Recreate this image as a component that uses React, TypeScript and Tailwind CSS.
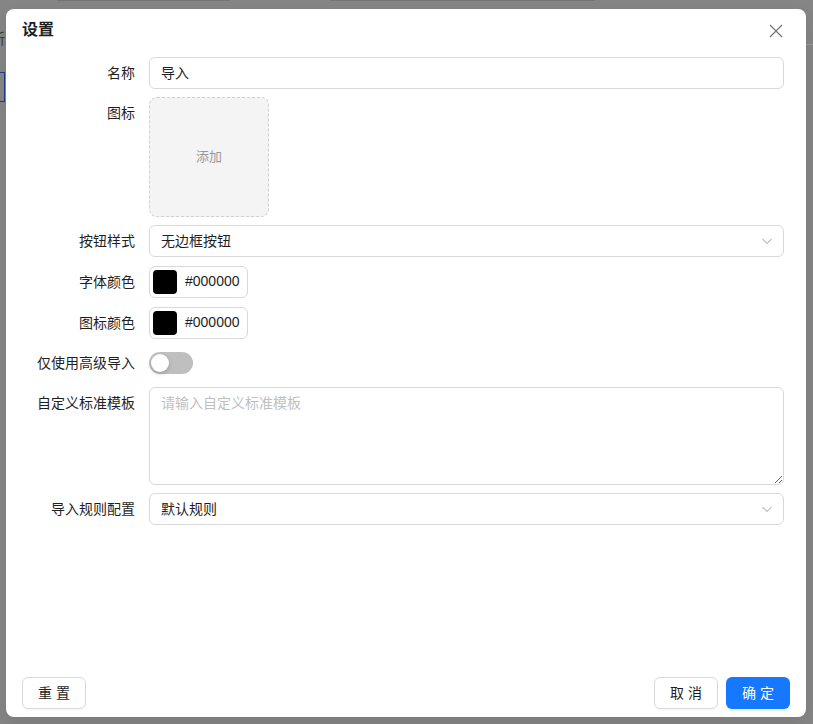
import React from "react";

const font = { fontFamily: '"Liberation Sans", "Noto Sans CJK SC", sans-serif' };

function Chevron() {
  return (
    <svg width="12" height="12" viewBox="0 0 12 12" className="shrink-0">
      <path d="M1.5 4 L6 8.5 L10.5 4" fill="none" stroke="#bfbfbf" strokeWidth="1.1" />
    </svg>
  );
}

function Label({ children }: { children: React.ReactNode }) {
  return (
    <div className="w-[127px] shrink-0 pr-[14px] text-right h-8 leading-8 text-[14px] text-[#1f1f1f] whitespace-nowrap">
      {children}
    </div>
  );
}

function Select({ value }: { value: string }) {
  return (
    <div className="flex-1 h-8 border border-[#d9d9d9] rounded-[6px] bg-white flex items-center justify-between pl-[11px] pr-[10px]">
      <span className="text-[14px] text-[#1f1f1f]">{value}</span>
      <Chevron />
    </div>
  );
}

function ColorPicker() {
  return (
    <div className="h-[32px] border border-[#d9d9d9] rounded-[6px] bg-white flex items-center pl-[3px] pr-[7px] gap-[8px]">
      <div className="w-6 h-6 rounded-[4px] bg-black" />
      <span className="text-[14px] text-[#1f1f1f]">#000000</span>
    </div>
  );
}

export default function App() {
  return (
    <div style={font} className="relative w-[813px] h-[724px] overflow-hidden bg-[#858585]">
      {/* faint page content under the mask */}
      <div className="absolute left-[57px] top-0 w-[173px] h-px bg-[#747474]" />
      <div className="absolute left-[330px] top-0 w-[265px] h-px bg-[#747474]" />
      <div className="absolute left-[-10px] top-[28px] text-[15px] text-[#3c3c3c]">新</div>
      <div className="absolute left-[-20px] top-[72px] w-[25px] h-[30px] border border-[#1c3d8a]" />
      <div className="absolute left-[806px] top-[44px] w-[7px] h-px bg-[#9a9a9a]" />

      <div className="absolute left-[6px] top-[9px] w-[800px] h-[708px] bg-white rounded-[8px] flex flex-col shadow-[0_6px_16px_rgba(0,0,0,0.08)]">
        <div className="relative px-4 pt-[9px] h-[48px]">
          <div className="text-[16px] leading-6 font-bold text-[#1f1f1f]">设置</div>
          <button className="absolute right-[23px] top-[15px] w-[14px] h-[14px] flex items-center justify-center">
            <svg width="14" height="14" viewBox="0 0 14 14">
              <path d="M1 1 L13 13 M13 1 L1 13" stroke="#777" strokeWidth="1.3" fill="none" />
            </svg>
          </button>
        </div>

        <div className="flex-1 flex flex-col gap-2 pl-4 pr-[22px]">
          <div className="flex items-center">
            <Label>名称</Label>
            <div className="flex-1 h-8 border border-[#d9d9d9] rounded-[6px] flex items-center px-[11px] text-[14px] text-[#1f1f1f]">
              导入
            </div>
          </div>

          <div className="flex items-start">
            <Label>图标</Label>
            <div className="w-[120px] h-[120px] border border-dashed border-[#d0d0d0] rounded-[8px] bg-[#f4f4f4] flex items-center justify-center text-[13px] text-[#999]">
              添加
            </div>
          </div>

          <div className="flex items-center">
            <Label>按钮样式</Label>
            <Select value="无边框按钮" />
          </div>

          <div className="flex items-center h-[33px]">
            <Label>字体颜色</Label>
            <ColorPicker />
          </div>

          <div className="flex items-center h-[33px]">
            <Label>图标颜色</Label>
            <ColorPicker />
          </div>

          <div className="flex items-center">
            <Label>仅使用高级导入</Label>
            <div className="w-[44px] h-[22px] rounded-full bg-[#bfbfbf] relative">
              <div className="absolute left-[2px] top-[2px] w-[18px] h-[18px] rounded-full bg-white shadow-[0_2px_4px_rgba(0,35,11,0.2)]" />
            </div>
          </div>

          <div className="flex items-start">
            <Label>自定义标准模板</Label>
            <textarea
              placeholder="请输入自定义标准模板"
              style={font}
              className="flex-1 h-[98px] border border-[#d9d9d9] rounded-[6px] px-[11px] py-[4px] text-[14px] leading-[22px] text-[#1f1f1f] placeholder:text-[#bfbfbf] outline-none resize-y"
            />
          </div>

          <div className="flex items-center">
            <Label>导入规则配置</Label>
            <Select value="默认规则" />
          </div>
        </div>

        <div className="flex items-center justify-between px-4 pb-[8px]">
          <button className="w-[64px] h-[32px] border border-[#d9d9d9] rounded-[6px] bg-white text-[14px] text-[#1f1f1f] tracking-[4px] pl-[4px] shadow-[0_2px_0_rgba(0,0,0,0.02)]">
            重置
          </button>
          <div className="flex gap-2">
            <button className="w-[64px] h-[32px] border border-[#d9d9d9] rounded-[6px] bg-white text-[14px] text-[#1f1f1f] tracking-[4px] pl-[4px] shadow-[0_2px_0_rgba(0,0,0,0.02)]">
              取消
            </button>
            <button className="w-[64px] h-[32px] rounded-[6px] bg-[#1677ff] text-[14px] text-white tracking-[4px] pl-[4px] shadow-[0_2px_0_rgba(5,145,255,0.1)]">
              确定
            </button>
          </div>
        </div>
      </div>
    </div>
  );
}
